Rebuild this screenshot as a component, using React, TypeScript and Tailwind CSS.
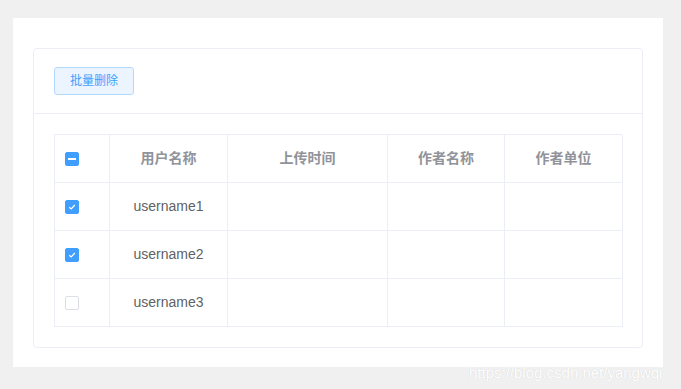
const font = { fontFamily: '"Liberation Sans", "Noto Sans CJK SC", sans-serif' };

const rows = [
  { name: 'username1', checked: true },
  { name: 'username2', checked: true },
  { name: 'username3', checked: false },
];

const headers = ['用户名称', '上传时间', '作者名称', '作者单位'];

function Checkbox({ state }: { state: 'checked' | 'indeterminate' | 'none' }) {
  if (state === 'none') {
    return <span className="block w-[14px] h-[14px] rounded-[2px] border border-[#dcdfe6] bg-white" />;
  }
  return (
    <span className="flex items-center justify-center w-[14px] h-[14px] rounded-[2px] bg-[#409eff] border border-[#409eff]">
      {state === 'indeterminate' ? (
        <span className="block w-[8px] h-[2px] bg-white" />
      ) : (
        <svg width="10" height="10" viewBox="0 0 10 10" fill="none">
          <path d="M2.2 5.2 L4.2 7 L7.8 3" stroke="white" strokeWidth="1.2" />
        </svg>
      )}
    </span>
  );
}

export default function App() {
  const cell = 'h-[48px] border-r border-b border-[#ebeef5] flex items-center';

  return (
    <div className="relative w-[681px] h-[389px] bg-[#f0f0f0] pt-[18px] pl-[13px]" style={font}>
      <div className="w-[650px] h-[349px] bg-white pt-[30px] px-[20px]">
        <div className="w-[610px] border border-[#ebeef5] rounded-[4px] bg-white">
          <div className="px-[20px] py-[18px] border-b border-[#ebeef5]">
            <button className="h-[28px] px-[15px] text-[12px] text-[#409eff] bg-[#ecf5ff] border border-[#b3d8ff] rounded-[3px]">
              批量删除
            </button>
          </div>
          <div className="p-[20px]">
            <div className="grid grid-cols-[55px_118px_160px_117px_118px] border-l border-t border-[#ebeef5] text-[14px]">
              <div className={`${cell} pl-[10px]`}>
                <Checkbox state="indeterminate" />
              </div>
              {headers.map((h) => (
                <div key={h} className={`${cell} justify-center font-bold text-[#909399]`}>
                  {h}
                </div>
              ))}
              {rows.map((r) => (
                <div key={r.name} className="contents">
                  <div className={`${cell} pl-[10px]`}>
                    <Checkbox state={r.checked ? 'checked' : 'none'} />
                  </div>
                  <div className={`${cell} justify-center text-[#606266]`}>{r.name}</div>
                  <div className={cell} />
                  <div className={cell} />
                  <div className={cell} />
                </div>
              ))}
            </div>
          </div>
        </div>
      </div>
      <div
        className="absolute left-[469px] top-[362px] text-[15px] text-white whitespace-nowrap"
        style={{ textShadow: '0 0 1px rgba(0,0,0,0.15)' }}
      >
        https://blog.csdn.net/yangwqi
      </div>
    </div>
  );
}
